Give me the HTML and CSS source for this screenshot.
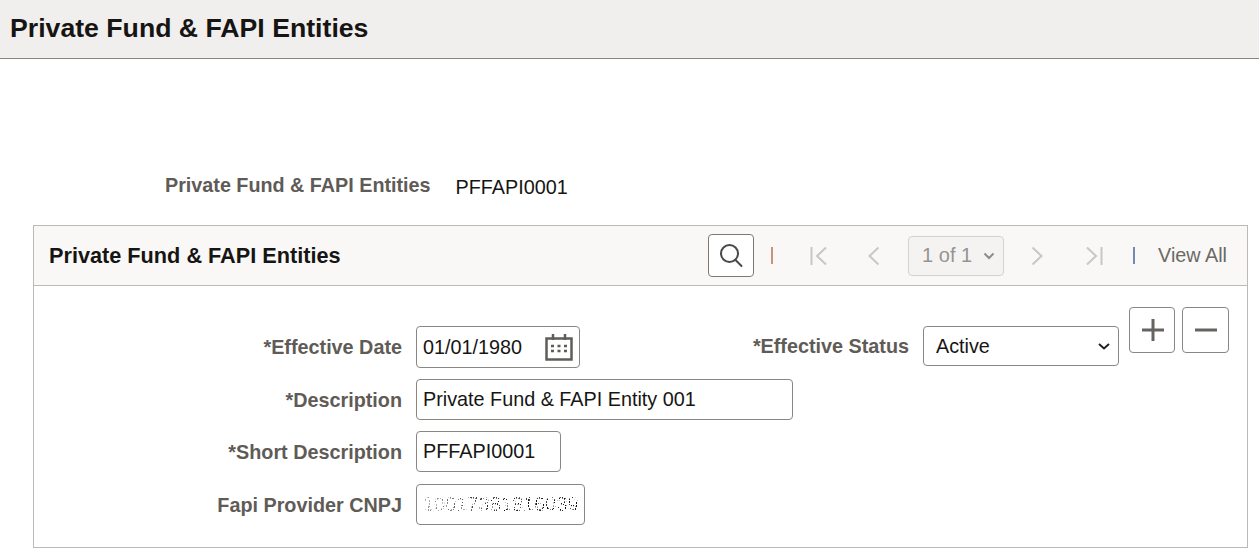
FILE: index.html
```html
<!DOCTYPE html>
<html lang="en">
    <head>
        <meta charset="UTF-8" />
        <meta name="viewport" content="width=device-width, initial-scale=1.0" />
        <title>Private Fund &amp; FAPI Entities</title>

        <link rel="stylesheet" href="styles.css">
    </head>

    <body>
        <header class="page-title">
            <h1>Private Fund &amp; FAPI Entities</h1>
        </header>

        <div class="key-row">
            <span class="key-label">Private Fund &amp; FAPI Entities</span>
            <span class="key-value">PFFAPI0001</span>
        </div>

        <section class="panel">
            <div class="panel-head">
                <h2>Private Fund &amp; FAPI Entities</h2>
                <div class="toolbar">
                    <button class="search-btn" aria-label="Search">
                        <svg width="26" height="26" viewBox="0 0 26 26" fill="none" stroke="#4a4845" stroke-width="2">
                            <circle cx="11.5" cy="10.5" r="8.5"/>
                            <path d="M17.5 17l6 6" stroke-linecap="round"/>
                        </svg>
                    </button>
                    <span class="sep sep-first"></span>
                    <svg class="nav first" width="18" height="20" viewBox="0 0 18 20" fill="none" stroke="#c9c7c4" stroke-width="2">
                        <path d="M1.500 1v18M16 1.500L7 10l9 8.500"/>
                    </svg>
                    <svg class="nav prev" width="12" height="20" viewBox="0 0 12 20" fill="none" stroke="#c9c7c4" stroke-width="2">
                        <path d="M10.500 1.500L1.500 10l9 8.500"/>
                    </svg>
                    <div class="pager">1 of 1
                        <svg width="12" height="8" viewBox="0 0 12 8" fill="none" stroke="#8d8b88" stroke-width="2">
                            <path d="M1.500 1.500L6 6l4.500-4.500"/>
                        </svg>
                    </div>
                    <svg class="nav next" width="12" height="20" viewBox="0 0 12 20" fill="none" stroke="#c9c7c4" stroke-width="2">
                        <path d="M1.500 1.500L10.500 10l-9 8.500"/>
                    </svg>
                    <svg class="nav last" width="18" height="20" viewBox="0 0 18 20" fill="none" stroke="#c9c7c4" stroke-width="2">
                        <path d="M16.500 1v18M2 1.500L11 10l-9 8.500"/>
                    </svg>
                    <span class="sep sep-last"></span>
                    <span class="view-all">View All</span>
                </div>
            </div>

            <div class="panel-body">
                <div class="row row-date">
                    <span class="label">*Effective Date</span>
                    <div class="field field-date">
                        <span>01/01/1980</span>
                        <svg width="28" height="28" viewBox="0 0 28 28" fill="none" stroke="#5f5d5a">
                            <path d="M1.500 5.500h25v21h-25z" stroke-width="2.500"/>
                            <path d="M8 1v6M20 1v6" stroke-width="2.500"/>
                            <path d="M6 13h3M12.500 13h3M19 13h3M6 18h3M12.500 18h3M19 18h3" stroke-width="2.500"/>
                        </svg>
                    </div>
                    <span class="label label-status">*Effective Status</span>
                    <div class="field field-status">
                        <span>Active</span>
                        <svg width="14" height="9" viewBox="0 0 14 9" fill="none" stroke="#222" stroke-width="2">
                            <path d="M2 2l5 4.500L12 2"/>
                        </svg>
                    </div>
                    <div class="row-actions">
                        <button class="icon-btn" aria-label="Add row">
                            <svg width="24" height="24" viewBox="0 0 24 24" stroke="#666461" stroke-width="3"><path d="M13 1v22M2 12h22"/></svg>
                        </button>
                        <button class="icon-btn icon-btn-del" aria-label="Delete row">
                            <svg width="24" height="24" viewBox="0 0 24 24" stroke="#666461" stroke-width="3"><path d="M1 12h22"/></svg>
                        </button>
                    </div>
                </div>
                <div class="row">
                    <span class="label">*Description</span>
                    <div class="field field-desc"><span>Private Fund &amp; FAPI Entity 001</span></div>
                </div>
                <div class="row">
                    <span class="label">*Short Description</span>
                    <div class="field field-short"><span>PFFAPI0001</span></div>
                </div>
                <div class="row">
                    <span class="label">Fapi Provider CNPJ</span>
                    <div class="field field-cnpj"><span class="masked">10017381816039</span></div>
                </div>
            </div>
        </section>
    </body>
</html>
```

FILE: styles.css
```css
/* page frame */
html, body {
    margin: 0;
    padding: 0;
    background: #fff;
}
body {
    font-family: "Liberation Sans", Arial, sans-serif;
    color: #161513;
    height: 556px;
    overflow: hidden;
}

.page-title {
    height: 58px;
    background: #f1efed;
    border-bottom: 1px solid #8a8782;
    display: flex;
    align-items: center;
    padding-left: 10px;
}
h1 {
    margin: 0 0 2px;
    font-size: 26.67px;
    font-weight: bold;
}

/* key line above the panel */
.key-row {
    display: flex;
    align-items: center;
    margin-top: 116px;
    padding-left: 165px;
    height: 24px;
}
.key-label {
    font-size: 19.75px;
    font-weight: bold;
    color: #5f5b57;
    margin-top: -3px;
}
.key-value {
    font-size: 19.8px;
    margin-left: 25px;
}

.panel {
    margin: 26px 11px 0 33px;
    border: 1px solid #bdbab5;
    height: 321px;
}
.panel-head {
    height: 59px;
    background: #f9f8f6;
    border-bottom: 1px solid #bdbab5;
    display: flex;
    align-items: center;
    justify-content: space-between;
    padding: 0 20px 0 15px;
}
h2 {
    margin: 0;
    font-size: 21.7px;
    font-weight: bold;
}

/* pager toolbar */
.toolbar {
    display: flex;
    align-items: center;
}
.search-btn {
    width: 46px;
    height: 43px;
    background: #fff;
    border: 1px solid #7d7a75;
    border-radius: 4px;
    padding: 0;
    display: flex;
    align-items: center;
    justify-content: center;
}
.sep {
    width: 2px;
    height: 17px;
}
.sep-first {
    background: #c7957d;
    margin: 0 37px 0 17px;
}
.sep-last {
    background: #6f8bb5;
    margin: 0 23px 0 30px;
}
.nav.prev { margin-left: 40px; }
.nav.next { margin-left: 27px; }
.nav.last { margin-left: 42px; }
.pager {
    margin-left: 28px;
    width: 96px;
    height: 40px;
    box-sizing: border-box;
    border: 1px solid #d4d2ce;
    border-radius: 4px;
    background: #f4f3f1;
    color: #969491;
    font-size: 20px;
    display: flex;
    align-items: center;
    justify-content: space-between;
    padding: 0 8px 0 13px;
}
.view-all {
    font-size: 19.8px;
    color: #6b6965;
}

/* form rows */
.panel-body {
    position: relative;
    padding-top: 40px;
}
.row {
    display: flex;
    align-items: center;
    height: 42px;
    margin-bottom: 10.500px;
}
.label {
    width: 368px;
    padding-top: 1px;
    text-align: right;
    font-size: 19.8px;
    font-weight: bold;
    color: #5f5b57;
    flex-shrink: 0;
}
.field {
    box-sizing: border-box;
    align-self: flex-start;
    height: 41px;
    margin-left: 14px;
    border: 1px solid #8a8782;
    border-radius: 4px;
    background: #fff;
    font-size: 19.8px;
    display: flex;
    align-items: center;
    justify-content: space-between;
    padding: 0 6px;
}
.field-date { width: 164px; height: 42px; padding-right: 6px; }
.field-status {
    width: 196px;
    height: 40px;
    margin-left: 14px;
    padding: 0 7px 0 12px;
}
.label-status {
    width: 329px;
    margin-top: -2px;
}
.field-desc { width: 377px; }
.field-short { width: 145px; }
.field-cnpj { width: 169px; }

/* the CNPJ value is scrambled in the source picture */
.masked {
    font-size: 20px;
    -webkit-mask-image: repeating-linear-gradient(100deg, #000 0 1.300px, transparent 1.300px 2.500px), repeating-linear-gradient(8deg, #000 0 1.800px, transparent 1.800px 3px), linear-gradient(90deg, rgba(0,0,0,0.4), #000 50%);
    mask-image: repeating-linear-gradient(100deg, #000 0 1.300px, transparent 1.300px 2.500px), repeating-linear-gradient(8deg, #000 0 1.800px, transparent 1.800px 3px), linear-gradient(90deg, rgba(0,0,0,0.4), #000 50%);
    -webkit-mask-composite: source-in;
    mask-composite: intersect;
}

/* add / delete sit a bit higher than the fields */
.row-actions {
    position: absolute;
    top: 21px;
    right: 18px;
    display: flex;
    gap: 7px;
}
.icon-btn {
    width: 46px;
    height: 46px;
    padding: 0;
    background: #fff;
    border: 1px solid #8a8782;
    border-radius: 4px;
    display: flex;
    align-items: center;
    justify-content: center;
}
.icon-btn-del {
    width: 47px;
}
```
